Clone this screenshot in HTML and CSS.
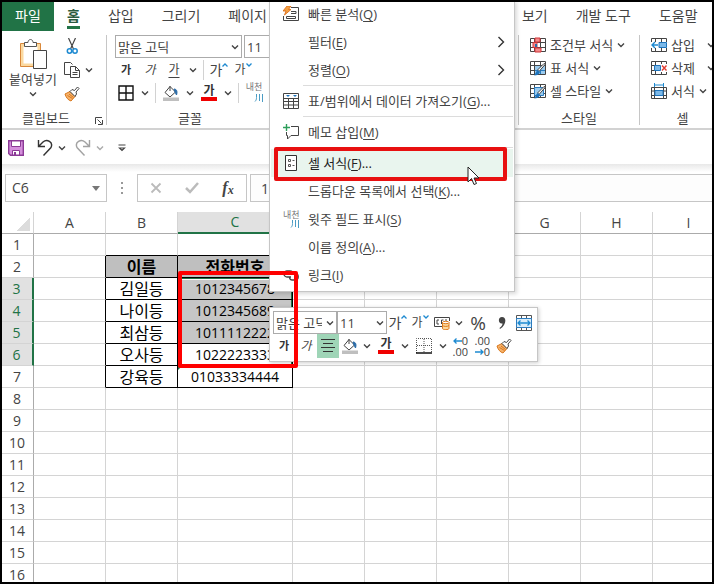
FILE: index.html
```
<!DOCTYPE html>
<html lang="ko">

<head>
    <meta charset="UTF-8">
    <meta name="viewport" content="width=device-width, initial-scale=1.0">
    <title>셀 서식</title>
    <link rel="stylesheet" href="styles.css">
</head>

<body>
    <!-- icons -->
    <svg class="sprite" aria-hidden="true">
        <symbol id="chev" viewBox="0 0 8 6"><path d="M1 1.500L4 4.500l3-3" fill="none" stroke="#444" stroke-width="1.400" /></symbol>
        <symbol id="fill" viewBox="0 0 16 16">
            <path d="M7 1.500L12.500 7 7 12 2 7.500z" fill="#fff" stroke="#444" />
            <path d="M7 1v5" stroke="#444" />
            <path d="M11 4c3 0 3.500 3 2.500 6l-1.500-3z" fill="#2b6ca8" stroke="#2b6ca8" />
            <path d="M0 12.500h16v3.500H0z" fill="#bfbfbf" />
        </symbol>
        <symbol id="brush" viewBox="0 0 16 16">
            <path d="M1 8l5-2.500 5 5-4 4.500C4 14 2 11.500 1 8z" fill="#f6b26b" stroke="#d9781c" />
            <path d="M3.500 9.500l5 3M5 8l4.500 3.500" stroke="#d9781c" />
            <path d="M6 5.500l2-2 2.500 1 3-3.500 1.500 1.500-3 3.500.500 2-1.500 2.500z" fill="#fff" stroke="#444" />
        </symbol>
        <symbol id="ruby" viewBox="0 0 16 16"><path d="M9.500 8v3.500c0 2-.5 3-1.500 4M12.500 8v7M15.500 8v8" fill="none" stroke="#4b9cc4" /></symbol>
        <symbol id="grow" viewBox="0 0 6 4"><path d="M.5 3.500L3 1l2.500 2.500" fill="none" stroke="#1e8ad1" stroke-width="1.300" /></symbol>
        <symbol id="shrink" viewBox="0 0 6 4"><path d="M.5.500L3 3 5.500.500" fill="none" stroke="#1e8ad1" stroke-width="1.300" /></symbol>
        <symbol id="sheet" viewBox="0 0 16 16">
            <path d="M.5 1.500h15v13H.5zM.5 5.500h15M.5 10.500h15M4.500 1.500v13M10.500 1.500v13" fill="#fff" stroke="#444" />
        </symbol>
        <symbol id="pen" viewBox="0 0 16 16">
            <path d="M15.500 4L9 11.500 7.500 10 14 3.500z" fill="#fff" stroke="#444" />
            <path d="M8 10l2 2c-.5 2.500-3 3.500-6 3.500 1.500-1 1.500-4.500 4-5.500z" fill="#1e74bd" />
        </symbol>
        <symbol id="more" viewBox="0 0 8 12"><path d="M1.500 1l5 5-5 5" fill="none" stroke="#333" stroke-width="1.400" /></symbol>
    </svg>

    <nav class="tabs">
        <button class="tab file">파일</button>
        <button class="tab active">홈</button>
        <button class="tab">삽입</button>
        <button class="tab">그리기</button>
        <button class="tab">페이지</button>
        <button class="tab after-menu">보기</button>
        <button class="tab">개발 도구</button>
        <button class="tab">도움말</button>
    </nav>

    <section class="ribbon">
        <div class="group clipboard">
            <div class="clip-body">
                <button class="paste">
                    <svg width="30" height="32" viewBox="0 0 30 32">
                        <path d="M2.500 5.500h20v23h-20z" fill="#fbd9a0" stroke="#d9883a" />
                        <path d="M5.500 8.500h14v17h-14z" fill="#fff" />
                        <path d="M6.500 8.500v-4H10c0-4 5-4 5 0h3.500v4z" fill="#fff" stroke="#555" />
                        <path d="M15.500 12.500h13v18h-13z" fill="#fff" stroke="#444" />
                    </svg>
                    <span>붙여넣기</span>
                    <svg class="chev"><use href="#chev" /></svg>
                </button>
                <div class="clip-side">
                    <button class="tool" aria-label="잘라내기"><svg width="16" height="16" viewBox="0 0 16 16">
                            <path d="M4.500 0l5 11M11.500 0l-5 11" stroke="#444" stroke-width="1.200" />
                            <g fill="#fff" stroke="#1e8ad1" stroke-width="1.500"><circle cx="5.500" cy="13" r="2.200" /><circle cx="11" cy="13" r="2.200" /></g>
                        </svg></button>
                    <div class="row"><button class="tool" aria-label="복사"><svg width="16" height="16" viewBox="0 0 16 16">
                                <path d="M6 12.500H.5v-12h6l2 2" fill="#fff" stroke="#444" />
                                <path d="M6.500 4.500h5l4 4v7h-9z" fill="#fff" stroke="#444" />
                                <path d="M11.500 4.500v4h4M8.500 10.500h5M8.500 12.500h5" fill="none" stroke="#444" />
                            </svg></button><button class="drop" aria-label="복사 옵션"><svg class="chev"><use href="#chev" /></svg></button></div>
                    <button class="tool" aria-label="서식 복사"><svg width="16" height="16"><use href="#brush" /></svg></button>
                </div>
            </div>
            <div class="group-name">클립보드</div>
            <button class="launcher" aria-label="클립보드 옵션"><svg width="8" height="8" viewBox="0 0 8 8"><path d="M.5 7V.5H7M2.500 2.500l4 4M7.500 3v4.500H3" fill="none" stroke="#444" /></svg></button>
        </div>

        <div class="group font">
            <div class="row combos">
                <label class="combo font-name"><select aria-label="글꼴"><option>맑은 고딕</option></select><svg class="chev"><use href="#chev" /></svg></label>
                <label class="combo font-size"><select aria-label="글꼴 크기"><option>11</option></select></label>
            </div>
            <div class="row tools">
                <button class="tool bold">가</button>
                <button class="tool italic">가</button>
                <button class="tool under">가</button>
                <button class="drop" aria-label="밑줄 옵션"><svg class="chev"><use href="#chev" /></svg></button>
                <i class="bar"></i>
                <button class="tool size-up">가<svg width="6" height="4"><use href="#grow" /></svg></button>
                <button class="tool size-down">가<svg width="6" height="4"><use href="#shrink" /></svg></button>
            </div>
            <div class="row tools">
                <button class="tool" aria-label="테두리"><svg width="16" height="16" viewBox="0 0 16 16"><path d="M1 1h14v14H1zM8 1v14M1 8h14" fill="none" stroke="#111" stroke-width="1.400" /></svg></button>
                <button class="drop" aria-label="테두리 옵션"><svg class="chev"><use href="#chev" /></svg></button>
                <i class="bar"></i>
                <button class="tool" aria-label="채우기 색"><svg width="16" height="16"><use href="#fill" /></svg></button>
                <button class="drop" aria-label="채우기 옵션"><svg class="chev"><use href="#chev" /></svg></button>
                <button class="tool color">가</button>
                <button class="drop" aria-label="글꼴 색 옵션"><svg class="chev"><use href="#chev" /></svg></button>
                <i class="bar"></i>
                <button class="tool ruby">내천<svg width="16" height="16"><use href="#ruby" /></svg></button>
            </div>
            <div class="group-name">글꼴</div>
        </div>

        <div class="group styles">
            <button class="command"><svg width="16" height="16" viewBox="0 0 16 16"><use href="#sheet" /><path d="M5 1h5v4H5zM3 5.500h4v5H3zM5 11h6v4H5z" fill="#f28b8b" stroke="#d13438" /><path d="M5 7h2v3H5z" fill="#2b6ca8" /></svg>조건부 서식<svg class="chev"><use href="#chev" /></svg></button>
            <button class="command"><svg width="16" height="16" viewBox="0 0 16 16"><use href="#sheet" /><path d="M5 6h10v8H5z" fill="#9bcbee" /><path d="M10.500 6v8M5 10.500h10" stroke="#2b7cc0" /><use href="#pen" /></svg>표 서식<svg class="chev"><use href="#chev" /></svg></button>
            <button class="command"><svg width="16" height="16" viewBox="0 0 16 16"><use href="#sheet" /><path d="M4.500 4.500h9v8h-9z" fill="#9bcbee" stroke="#2b7cc0" /><use href="#pen" /></svg>셀 스타일<svg class="chev"><use href="#chev" /></svg></button>
            <div class="group-name">스타일</div>
        </div>

        <div class="group cells">
            <button class="command"><svg width="16" height="16" viewBox="0 0 16 16"><use href="#sheet" /><path d="M0 5h16v6H0z" fill="#fff" /><path d="M8 5.500h7.500v5H8z" fill="#7db9e8" stroke="#1e74bd" /><path d="M7 8H1M4 5L1 8l3 3" fill="none" stroke="#1e8ad1" stroke-width="1.400" /></svg>삽입<svg class="chev end"><use href="#chev" /></svg></button>
            <button class="command"><svg width="16" height="16" viewBox="0 0 16 16"><use href="#sheet" /><path d="M9 4h7v8H9z" fill="#fff" /><path d="M3.500 5.500h6v5h-6z" fill="#7db9e8" stroke="#1e74bd" /><path d="M11 5.500l4.500 5M15.500 5.500l-4.500 5" stroke="#e03c31" stroke-width="1.400" /></svg>삭제<svg class="chev end"><use href="#chev" /></svg></button>
            <button class="command"><svg width="16" height="16" viewBox="0 0 16 16"><path d="M.5 4.500h15v11H.5zM.5 8h15M.5 12.500h15M3.500 4.500v11M12.500 4.500v11" fill="#fff" stroke="#444" /><path d="M4 7.500h8v5H4z" fill="#7db9e8" stroke="#1e74bd" /><path d="M3.500 0v4M12.500 0v4M4 2h8" stroke="#1e8ad1" /></svg>서식<svg class="chev"><use href="#chev" /></svg></button>
            <div class="group-name">셀</div>
        </div>
    </section>

    <div class="quick">
        <button class="tool" aria-label="저장"><svg width="16" height="16" viewBox="0 0 16 16"><path d="M.7.700h14.600v14.600H2.500L.7 13.500z" fill="#d58fdc" stroke="#8b3a96" stroke-width="1.400" /><path d="M3.500 1h9v5.500h-9zM4.500 10.500h7V15h-7z" fill="#fff" stroke="#8b3a96" /><path d="M6 12h2v3H6z" fill="#8b3a96" /></svg></button>
        <button class="tool" aria-label="실행 취소"><svg width="16" height="18" viewBox="0 0 16 18"><path d="M1.500 1v6.500H8M2 7l4-4c4-3.500 10.500 0 8 5.500L6.500 16.500" fill="none" stroke="#333" stroke-width="1.400" /></svg></button>
        <button class="drop" aria-label="실행 취소 목록"><svg class="chev"><use href="#chev" /></svg></button>
        <button class="tool faded" aria-label="다시 실행"><svg width="16" height="18" viewBox="0 0 16 18"><path d="M14.500 1v6.500H8M14 7l-4-4C6-.5-.5 3 2 8.500L9.500 16.500" fill="none" stroke="#333" stroke-width="1.400" /></svg></button>
        <button class="drop faded" aria-label="다시 실행 목록"><svg class="chev"><use href="#chev" /></svg></button>
        <button class="drop" aria-label="빠른 실행 사용자 지정"><svg width="8" height="8" viewBox="0 0 8 8"><path d="M.5 1h7M1.500 4L4 6.500 6.500 4z" fill="none" stroke="#444" stroke-width="1.200" /></svg></button>
    </div>

    <div class="formula">
        <label class="name-box"><input type="text" value="C6" aria-label="이름 상자"><svg width="8" height="5" viewBox="0 0 8 5"><path d="M0 0h8L4 5z" fill="#777" /></svg></label>
        <svg class="dots" width="2" height="12" viewBox="0 0 2 12"><path d="M0 1h2M0 6h2M0 11h2" stroke="#999" stroke-width="2" /></svg>
        <div class="formula-tools">
            <button aria-label="취소"><svg width="12" height="12" viewBox="0 0 12 12"><path d="M1.500 1.500l9 9M10.500 1.500l-9 9" stroke="#bbb" stroke-width="1.800" /></svg></button>
            <button aria-label="입력"><svg width="14" height="12" viewBox="0 0 14 12"><path d="M1 6l4 4 8-9" fill="none" stroke="#bbb" stroke-width="2.500" /></svg></button>
            <button class="fx">f<small>x</small></button>
        </div>
        <input class="formula-text" type="text" value="1022223333" aria-label="수식 입력줄">
    </div>

    <table class="grid">
        <colgroup><col class="col-head"><col><col><col class="col-wide"><col><col><col><col><col><col></colgroup>
        <thead>
            <tr><th class="corner"></th><th>A</th><th>B</th><th class="on">C</th><th></th><th></th><th></th><th>G</th><th>H</th><th>I</th></tr>
        </thead>
        <tbody>
            <tr><th>1</th><td></td><td class="above"></td><td class="above"></td><td></td><td></td><td></td><td></td><td></td><td></td></tr>
            <tr><th>2</th><td class="before"></td><td class="box title">이름</td><td class="box title">전화번호</td><td></td><td></td><td></td><td></td><td></td><td></td></tr>
            <tr><th class="on">3</th><td class="before"></td><td class="box">김일등</td><td class="box num picked first">1012345678</td><td></td><td></td><td></td><td></td><td></td><td></td></tr>
            <tr><th class="on">4</th><td class="before"></td><td class="box">나이등</td><td class="box num picked">1012345689</td><td></td><td></td><td></td><td></td><td></td><td></td></tr>
            <tr><th class="on">5</th><td class="before"></td><td class="box">최삼등</td><td class="box num picked">1011112222</td><td></td><td></td><td></td><td></td><td></td><td></td></tr>
            <tr><th class="on">6</th><td class="before"></td><td class="box">오사등</td><td class="box num current">1022223333</td><td></td><td></td><td></td><td></td><td></td><td></td></tr>
            <tr><th>7</th><td class="before"></td><td class="box">강육등</td><td class="box num flag">01033334444</td><td></td><td></td><td></td><td></td><td></td><td></td></tr>
            <tr><th>8</th><td></td><td></td><td></td><td></td><td></td><td></td><td></td><td></td><td></td></tr>
            <tr><th>9</th><td></td><td></td><td></td><td></td><td></td><td></td><td></td><td></td><td></td></tr>
            <tr><th>10</th><td></td><td></td><td></td><td></td><td></td><td></td><td></td><td></td><td></td></tr>
            <tr><th>11</th><td></td><td></td><td></td><td></td><td></td><td></td><td></td><td></td><td></td></tr>
            <tr><th>12</th><td></td><td></td><td></td><td></td><td></td><td></td><td></td><td></td><td></td></tr>
            <tr><th>13</th><td></td><td></td><td></td><td></td><td></td><td></td><td></td><td></td><td></td></tr>
            <tr><th>14</th><td></td><td></td><td></td><td></td><td></td><td></td><td></td><td></td><td></td></tr>
            <tr><th>15</th><td></td><td></td><td></td><td></td><td></td><td></td><td></td><td></td><td></td></tr>
            <tr><th>16</th><td></td><td></td><td></td><td></td><td></td><td></td><td></td><td></td><td></td></tr>
        </tbody>
    </table>

    <!-- context menu -->
    <div class="menu">
        <button class="item"><svg class="pic" width="16" height="16" viewBox="0 0 16 16"><path d="M8 1.500h7.500v13H.5V10" fill="none" stroke="#444" /><path d="M8 5.500h5v2H8M3.500 10.500h9v2h-9z" fill="none" stroke="#444" /><path d="M4 0h4L5.500 3.500H8L1.500 9 3 5H0z" fill="#f2a044" stroke="#d9640c" stroke-width=".8" /></svg><span>빠른 분석(<u>Q</u>)</span></button>
        <button class="item"><span>필터(<u>E</u>)</span><svg class="more"><use href="#more" /></svg></button>
        <button class="item"><span>정렬(<u>O</u>)</span><svg class="more"><use href="#more" /></svg></button>
        <hr>
        <button class="item"><svg class="pic" width="16" height="16" viewBox="0 0 16 16"><path d="M.5.500h15v15H.5zM.5 5.500h15M.5 8.500h15M.5 12h15M5.500 5.500v10M10.500 5.500v10" fill="none" stroke="#444" /><path d="M3 2h4L5 4zM10 2h4l-2 2z" fill="#1e74bd" /></svg><span>표/범위에서 데이터 가져오기(<u>G</u>)...</span></button>
        <hr>
        <button class="item"><svg class="pic" width="16" height="16" viewBox="0 0 16 16"><path d="M8 2.500h7.500v9H8L4.500 15v-3.500h-1V8" fill="none" stroke="#444" /><path d="M0 3.500h7M3.500 0v7" stroke="#2e9e5b" stroke-width="1.400" /></svg><span>메모 삽입(<u>M</u>)</span></button>
        <hr>
        <button class="item hover"><svg class="pic" width="16" height="16" viewBox="0 0 16 16"><path d="M2.500.500h11v15h-11z" fill="#fff" stroke="#333" /><path d="M5.500 4.500h2v2h-2zM5.500 9.500h2v2h-2zM9.500 5.500h2M9.500 10.500h2" fill="none" stroke="#555" /></svg><span>셀 서식(<u>F</u>)...</span></button>
        <button class="item"><span>드롭다운 목록에서 선택(<u>K</u>)...</span></button>
        <button class="item"><span class="pic ruby">내천<svg width="16" height="16"><use href="#ruby" /></svg></span><span>윗주 필드 표시(<u>S</u>)</span></button>
        <button class="item"><span>이름 정의(<u>A</u>)...</span></button>
        <button class="item"><svg class="pic" width="16" height="16" viewBox="0 0 16 16"><path d="M8 10H4a3 3 0 010-6h3a3 3 0 013 3M8 6.500h4a3 3 0 010 6.500H9.500a3 3 0 01-3-3" fill="none" stroke="#444" stroke-width="1.300" /></svg><span>링크(<u>I</u>)</span></button>
    </div>

    <!-- mini toolbar -->
    <div class="mini">
        <div class="row">
            <label class="combo mini-name"><select aria-label="글꼴"><option>맑은 고딕</option></select><svg class="chev"><use href="#chev" /></svg></label>
            <label class="combo mini-size"><select aria-label="글꼴 크기"><option>11</option></select><svg class="chev"><use href="#chev" /></svg></label>
            <button class="tool size-up">가<svg width="6" height="4"><use href="#grow" /></svg></button>
            <button class="tool size-down">가<svg width="6" height="4"><use href="#shrink" /></svg></button>
            <button class="tool" aria-label="회계 표시 형식"><svg width="16" height="14" viewBox="0 0 16 14"><path d="M8 10.500H.5v-9h15V5" fill="#fff" stroke="#444" /><path d="M5 4H3v4h2M9.500 4h-2v4M11 4h2" fill="none" stroke="#444" /><path d="M8.500 6.500v6c0 1.500 6.500 1.500 6.500 0v-6z" fill="#fbd9a0" stroke="#e07b1a" /><ellipse cx="11.750" cy="6.500" rx="3.250" ry="1.200" fill="#fff" stroke="#e07b1a" /><path d="M8.500 9.500c1 1.200 5.500 1.200 6.500 0" fill="none" stroke="#e07b1a" /></svg></button>
            <button class="drop" aria-label="회계 옵션"><svg class="chev"><use href="#chev" /></svg></button>
            <button class="tool wide percent">%</button>
            <button class="tool" aria-label="쉼표 스타일"><svg width="8" height="14" viewBox="0 0 8 14"><path d="M4 1c5 0 4.500 8-2 12l-.5-1C4 10 4.500 9 4.500 7.500 0 8.500-.5 1 4 1z" fill="#444" /></svg></button>
            <button class="tool" aria-label="병합하고 가운데 맞춤"><svg width="16" height="16" viewBox="0 0 16 16"><path d="M.5.500h15v15H.5zM5.500.500v15M10.500.500v15" fill="#fff" stroke="#555" /><path d="M.5 3.500h15v9H.5z" fill="#d8ecf9" stroke="#2b7cc0" /><path d="M2 8h12M4.500 5.500L2 8l2.500 2.500M11.500 5.500L14 8l-2.500 2.500" fill="none" stroke="#1e8ad1" stroke-width="1.300" /></svg></button>
        </div>
        <div class="row">
            <button class="tool bold">가</button>
            <button class="tool italic">가</button>
            <button class="tool pressed" aria-label="가운데 맞춤"><svg width="16" height="14" viewBox="0 0 16 14"><path d="M1 .5h14M3 4.500h10M1 8.500h14M3 12.500h10" stroke="#333" /></svg></button>
            <button class="tool" aria-label="채우기 색"><svg width="16" height="16"><use href="#fill" /></svg></button>
            <button class="drop" aria-label="채우기 옵션"><svg class="chev"><use href="#chev" /></svg></button>
            <button class="tool wide color">가</button>
            <button class="drop" aria-label="글꼴 색 옵션"><svg class="chev"><use href="#chev" /></svg></button>
            <button class="tool wide" aria-label="테두리"><svg width="16" height="16" viewBox="0 0 16 16"><path d="M.5 15V.5h15V15M8 1v14M1 7.500h14" fill="none" stroke="#555" stroke-dasharray="1 1" /><path d="M0 15h16" stroke="#111" stroke-width="1.500" /></svg></button>
            <button class="drop" aria-label="테두리 옵션"><svg class="chev"><use href="#chev" /></svg></button>
            <button class="tool decimal"><span><svg width="9" height="6" viewBox="0 0 9 6"><path d="M9 3H1M3.500.500L1 3l2.500 2.500" fill="none" stroke="#1e8ad1" stroke-width="1.300" /></svg>0</span><span>.00</span></button>
            <button class="tool decimal"><span>.00</span><span><svg width="9" height="6" viewBox="0 0 9 6"><path d="M0 3h8M5.500.500L8 3 5.500 5.500" fill="none" stroke="#1e8ad1" stroke-width="1.300" /></svg>0</span></button>
            <button class="tool" aria-label="서식 복사"><svg width="16" height="16"><use href="#brush" /></svg></button>
        </div>
    </div>

    <!-- marks -->
    <div class="mark mark-cells"></div>
    <div class="mark mark-item"></div>
    <svg class="cursor" width="13" height="20" viewBox="0 0 13 20"><path d="M1 1v15l3.500-3.500L7 18.500l2.500-1-2.500-5.500h5z" fill="#fff" stroke="#222" /></svg>
</body>

</html>
```
FILE: styles.css
```
* {
    box-sizing: border-box;
}

body {
    position: relative;
    height: 100vh;
    margin: 0;
    border: 2px solid #000;
    overflow: hidden;
    background-color: #fff;
    color: #444;
    font: 13px/18px "Open Sans", "Noto Sans CJK KR", sans-serif;
}

button,
input,
select {
    margin: 0;
    padding: 0;
    border: 0;
    background: none;
    color: inherit;
    font: inherit;
}

svg {
    display: block;
    flex: none;
}

.sprite {
    display: none;
}

.chev {
    width: 8px;
    height: 6px;
}

.row {
    display: flex;
    align-items: center;
}

/* tabs */
.tabs {
    display: flex;
    gap: 28px;
    height: 29px;
    font-size: 14px;
}

.tab {
    position: relative;
    flex: none;
    padding-bottom: 2px;
    white-space: nowrap;
}

.file {
    width: 52px;
    margin-right: -15px;
    background-color: #217346;
    color: #fff;
}

.active {
    color: #2b5a40;
    font-weight: bold;
}

.active::after {
    content: "";
    position: absolute;
    left: 0;
    bottom: 2px;
    width: 100%;
    height: 3px;
    background-color: #217346;
}

.after-menu {
    margin-left: 227px;
}

/* ribbon */
.ribbon {
    display: flex;
    height: 99px;
    padding: 4px 0 3px;
    border-bottom: 2px solid #d2d2d2;
}

.group {
    position: relative;
    display: flex;
    flex: none;
    flex-direction: column;
}

.group-name {
    margin-top: auto;
    line-height: 14px;
    text-align: center;
}

.clipboard {
    width: 105px;
    padding-right: 18px;
    border-right: 1px solid #c6c6c6;
}

.clip-body {
    display: flex;
    gap: 1px;
    margin-right: -18px;
    padding-left: 4px;
}

.paste {
    display: flex;
    flex-direction: column;
    align-items: center;
    width: 54px;
    padding-top: 3px;
}

.paste .chev {
    margin-top: 3px;
}

.clip-side {
    display: flex;
    flex-direction: column;
    gap: 2px;
}

.clipboard .group-name {
    padding-left: 2px;
}

.launcher {
    position: absolute;
    right: 3px;
    bottom: 0;
}

.tool {
    display: flex;
    flex: none;
    align-items: center;
    justify-content: center;
    width: 22px;
    height: 22px;
}

.wide {
    width: 26px;
}

.drop {
    display: flex;
    flex: none;
    align-items: center;
    justify-content: center;
    width: 12px;
    height: 22px;
}

.bar {
    width: 1px;
    height: 20px;
    margin: 0 2px;
    background-color: #d2d2d2;
}

.bold {
    color: #333;
    font-weight: bold;
    font-size: 11px;
}

.italic {
    font-style: italic;
    font-size: 12px;
}

.under {
    text-decoration: underline;
    text-underline-offset: 3px;
    font-size: 12px;
}

.size-up,
.size-down {
    font-size: 14px;
}

.size-down {
    font-size: 12px;
}

.size-up svg,
.size-down svg {
    align-self: flex-start;
    margin-top: 4px;
}

.color {
    color: #333;
    font-weight: bold;
    font-size: 12px;
    line-height: 12px;
    flex-direction: column;
}

.color::after {
    content: "";
    width: 16px;
    height: 4px;
    background-color: #f00000;
}

.ruby {
    position: relative;
    color: #777;
    font-size: 9px;
    line-height: 10px;
    white-space: nowrap;
    align-items: flex-start;
}

.ruby svg {
    position: absolute;
    right: 2px;
    bottom: 2px;
}

.font {
    width: 166px;
    padding-left: 8px;
}

.font .group-name {
    padding-right: 8px;
}

.combos {
    gap: 2px;
    margin-bottom: 1px;
}

.tools {
    gap: 2px;
    margin-bottom: 1px;
}

.combo {
    position: relative;
    flex: none;
    height: 23px;
    border: 1px solid #ababab;
    background-color: #fff;
}

.combo select {
    width: 100%;
    height: 100%;
    padding: 0 14px 0 2px;
    appearance: none;
    text-overflow: clip;
}

.combo .chev {
    position: absolute;
    right: 2px;
    top: 8px;
}

.font-name {
    width: 127px;
}

.font-size {
    width: 45px;
}

.styles {
    width: 122px;
    margin-left: 245px;
    padding-left: 11px;
    border-left: 1px solid #c6c6c6;
    border-right: 1px solid #c6c6c6;
}

.cells {
    width: 86px;
    padding-left: 11px;
}

.styles .group-name {
    padding-right: 11px;
}

.cells .group-name {
    padding-right: 12px;
}

.command {
    display: flex;
    align-items: center;
    gap: 4px;
    height: 23px;
    padding-bottom: 3px;
    white-space: nowrap;
}

.end {
    margin-left: 8px;
}

/* quick access */
.quick {
    display: flex;
    align-items: center;
    height: 34px;
    padding: 2px 0 0 3px;
}

.quick .tool + .tool {
    margin-left: 7px;
}

.quick .drop + .tool {
    margin-left: 4px;
}

.quick .drop + .drop {
    margin-left: 10px;
}

.faded {
    opacity: .45;
}

/* formula bar */
.formula {
    display: flex;
    align-items: center;
    height: 48px;
    padding: 9px 0 9px 3px;
    background-image: linear-gradient(#e8e8e8, #fff 8px);
}

.name-box {
    display: flex;
    align-items: center;
    width: 102px;
    height: 28px;
    padding: 0 6px;
    border: 1px solid #c6c6c6;
}

.name-box input {
    flex: 1;
    min-width: 0;
    font-size: 14px;
}

.dots {
    margin: 0 14px;
}

.formula-tools {
    display: flex;
    width: 110px;
    height: 28px;
    border: 1px solid #c6c6c6;
}

.formula-tools button {
    display: flex;
    flex: 1;
    align-items: center;
    justify-content: center;
}

.fx {
    font: italic bold 16px "Liberation Serif", serif;
}

.fx small {
    font-size: 12px;
    padding-top: 4px;
}

.formula-text {
    flex: 1;
    height: 28px;
    margin-left: 3px;
    padding: 0 10px;
    border: 1px solid #c6c6c6;
    border-right: 0;
    background-color: #fdfdfd;
    font-size: 14px;
}

/* sheet */
.grid {
    width: 723px;
    table-layout: fixed;
    border-collapse: separate;
    border-spacing: 0;
}

.grid col {
    width: 72px;
}

.grid .col-head {
    width: 32px;
}

.grid .col-wide {
    width: 115px;
}

.grid th,
.grid td {
    height: 22px;
    padding: 0;
    border-right: 1px solid #d4d4d4;
    border-bottom: 1px solid #d4d4d4;
    font-weight: normal;
    line-height: 20px;
    text-align: center;
    white-space: nowrap;
}

.grid th {
    font-size: 14px;
}

.grid thead th {
    border-bottom-color: #ababab;
    line-height: 18px;
}

.grid tbody th {
    border-right-color: #ababab;
    padding-right: 1px;
}

.grid th.on {
    background-color: #e1e1e1;
    color: #217346;
}

.grid thead .on {
    border-bottom: 2px solid #217346;
}

.grid tbody .on {
    border-right: 2px solid #217346;
}

.corner {
    background: linear-gradient(135deg, #fff 50%, #dcdcdc 50%) 14px 5px / 14px 14px no-repeat;
}

.grid td {
    color: #000;
    font-size: 16px;
}

.grid .above {
    border-bottom-color: #000;
}

.grid .before {
    border-right-color: #000;
}

.grid .box {
    border-color: #000;
}

.grid .title {
    background-color: #bfbfbf;
    font-weight: bold;
}

.grid .num {
    position: relative;
    font-size: 14px;
}

.grid .picked {
    background-color: #c6c6c6;
}

.picked,
.current {
    box-shadow: inset 1px 0 #217346, inset -1px 0 #217346;
}

.first {
    box-shadow: inset 1px 0 #217346, inset -1px 0 #217346, inset 0 1px #217346, inset 0 2px #fff;
}

.flag::before {
    content: "";
    position: absolute;
    left: 0;
    top: 0;
    border: 2px solid #217346;
    border-right-color: transparent;
    border-bottom-color: transparent;
}

/* menu */
.menu {
    position: absolute;
    left: 267px;
    top: -2px;
    width: 246px;
    padding: 0 1px 2px;
    border: 1px solid #c6c6c6;
    border-top: 0;
    background-color: #fff;
    box-shadow: 2px 2px 4px rgba(0, 0, 0, .15);
}

.menu hr {
    height: 1px;
    margin: 1px 0 1px 32px;
    border: 0;
    background-color: #dcdcdc;
}

.item {
    display: grid;
    grid-template-columns: 16px 1fr 8px;
    column-gap: 9px;
    align-items: center;
    width: 100%;
    height: 28px;
    padding: 0 8px 0 12px;
    text-align: left;
    white-space: nowrap;
}

.item > span {
    grid-column: 2;
    grid-row: 1;
}

.item > .pic {
    grid-column: 1;
    grid-row: 1;
}

.item > .ruby {
    height: 18px;
}

.item > .ruby svg {
    right: 0;
    bottom: 0;
}

.item u {
    text-underline-offset: 2px;
}

.more {
    grid-column: 3;
    width: 8px;
    height: 12px;
}

.hover {
    background-color: #e9f5ee;
    color: #222;
}

/* mini toolbar */
.mini {
    position: absolute;
    left: 267px;
    top: 305px;
    width: 269px;
    padding: 3px;
    border: 1px solid #c6c6c6;
    background-color: #fff;
    box-shadow: 1px 1px 4px rgba(0, 0, 0, .2);
}

.mini-name {
    width: 64px;
}

.mini-size {
    width: 50px;
}

.mini .size-up svg,
.mini .size-down svg {
    margin-top: 3px;
}

.pressed {
    height: 24px;
    background-color: #9fd5b7;
}

.percent {
    font-size: 19px;
}

.decimal {
    flex-direction: column;
    align-items: stretch;
    font-size: 11px;
    line-height: 11px;
}

.decimal span {
    display: flex;
    align-items: center;
    justify-content: flex-end;
    padding-right: 3px;
}

/* marks */
.mark {
    position: absolute;
    border: 4px solid #f00;
    border-radius: 2px;
}

.mark-cells {
    left: 176px;
    top: 269px;
    width: 120px;
    height: 97px;
}

.mark-item {
    left: 272px;
    top: 145px;
    width: 233px;
    height: 34px;
    border-color: #e81010;
}

.cursor {
    position: absolute;
    left: 465px;
    top: 164px;
}
```
